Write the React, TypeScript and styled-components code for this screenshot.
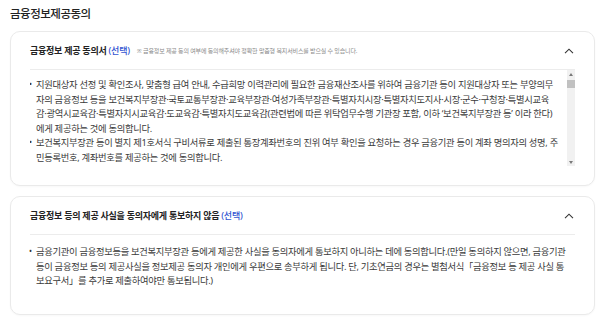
import React, { useEffect, useRef, useState } from 'react'
import styled, { createGlobalStyle } from 'styled-components'

//GLOBAL
const GlobalStyle = createGlobalStyle`
  html, body {
    margin: 0;
    padding: 0;
    background: #ffffff;
  }
  body {
    font-family: 'Noto Sans', 'Noto Sans CJK KR', sans-serif;
    color: #222222;
  }
`

//STYLES
const Page = styled.div`
  width: 600px;
  box-sizing: border-box;
  padding: 5px 5px 6px 10px;
`

const PageTitle = styled.h2`
  margin: 0 0 8px;
  font-size: 11.5px;
  line-height: 18px;
  font-weight: 500;
  letter-spacing: -0.5px;
  color: #222;
`

const Card = styled.section`
  box-sizing: border-box;
  border: 1px solid #eaeaea;
  border-radius: 10px;
  padding: 0 19px;
  background: #fff;
  box-shadow: 0 1px 2px rgba(0, 0, 0, 0.03);

  & + & {
    margin-top: 10px;
  }
`

const CardHeader = styled.header`
  display: flex;
  align-items: center;
  height: 37px;
  border-bottom: 1px solid #ececec;
`

const HeaderTitle = styled.h3`
  margin: 0;
  font-size: 9px;
  font-weight: 700;
  letter-spacing: -0.25px;
  color: #222;
  white-space: nowrap;
`

const Optional = styled.span`
  color: #3355d1;
  font-weight: 500;
`

const Note = styled.span`
  margin-left: 7px;
  font-size: 6px;
  letter-spacing: -0.15px;
  color: #8a8a8a;
  white-space: nowrap;
`

const Toggle = styled.button`
  margin-left: auto;
  margin-right: 1px;
  padding: 0;
  border: 0;
  background: none;
  display: flex;
  align-items: center;
  cursor: pointer;
  color: #333;
`

const CardBody = styled.div<{ $top: number; $bottom: number }>`
  padding: ${p => p.$top}px 0 ${p => p.$bottom}px;
`

const ScrollArea = styled.div`
  display: flex;
  height: 96px;
`

const ScrollContent = styled.div`
  flex: 1;
  min-width: 0;
  overflow-y: auto;
  scrollbar-width: none;
  padding-top: 8px;
  box-sizing: border-box;

  &::-webkit-scrollbar {
    display: none;
  }
`

const Scrollbar = styled.div`
  display: flex;
  flex-direction: column;
  width: 8px;
  flex-shrink: 0;
  background: #f1f1f1;
`

const ScrollButton = styled.div`
  display: flex;
  align-items: center;
  justify-content: center;
  height: 8px;
  color: #7a7a7a;
`

const ScrollTrack = styled.div`
  flex: 1;
  position: relative;
`

const ScrollThumb = styled.div`
  position: absolute;
  left: 0;
  right: 0;
  height: 8px;
  background: #c1c1c1;
`

const List = styled.ul`
  margin: 0;
  padding: 0;
  list-style: none;
`

const Item = styled.li`
  position: relative;
  padding-left: 6px;
  font-size: 9.3px;
  line-height: 14.5px;
  letter-spacing: -0.3px;
  color: #3a3a3a;
  white-space: nowrap;

  &::before {
    content: '•';
    position: absolute;
    left: -1px;
    top: -1px;
    font-size: 8px;
    color: #333;
  }
`

//ICONS
const ChevronUp = () => (
  <svg width="10" height="6" viewBox="0 0 10 6" fill="none">
    <path d="M1 5.2 L5 1.2 L9 5.2" stroke="currentColor" strokeWidth="1.1" />
  </svg>
)

const Arrow = ({ down }: { down?: boolean }) => (
  <svg width="4" height="3" viewBox="0 0 4 3">
    <polygon points={down ? '0,0 4,0 2,3' : '2,0 4,3 0,3'} fill="currentColor" />
  </svg>
)

//DATA
const CONSENT_ITEMS: React.ReactNode[] = [
  <>
    지원대상자 선정 및 확인조사, 맞춤형 급여 안내, 수급희망 이력관리에 필요한 금융재산조사를 위하여 금융기관 등이 지원대상자 또는 부양의무<br />
    자의 금융정보 등을 보건복지부장관·국토교통부장관·교육부장관·여성가족부장관·특별자치시장·특별자치도지사·시장·군수·구청장·특별시교육<br />
    감·광역시교육감·특별자치시교육감·도교육감·특별자치도교육감(관련법에 따른 위탁업무수행 기관장 포함, 이하 ‘보건복지부장관 등’ 이라 한다)<br />
    에게 제공하는 것에 동의합니다.
  </>,
  <>
    보건복지부장관 등이 별지 제1호서식 구비서류로 제출된 통장계좌번호의 진위 여부 확인을 요청하는 경우 금융기관 등이 계좌 명의자의 성명, 주<br />
    민등록번호, 계좌번호를 제공하는 것에 동의합니다.
  </>,
]

const NOTICE_ITEMS: React.ReactNode[] = [
  <>
    금융기관이 금융정보등을 보건복지부장관 등에게 제공한 사실을 동의자에게 통보하지 아니하는 데에 동의합니다.(만일 동의하지 않으면, 금융기관<br />
    등이 금융정보 등의 제공사실을 정보제공 동의자 개인에게 우편으로 송부하게 됩니다. 단, 기초연금의 경우는 별첨서식「금융정보 등 제공 사실 통<br />
    보요구서」를 추가로 제출하여야만 통보됩니다.)
  </>,
]

//COMPONENTS
const ScrollPanel = ({ children }: { children: React.ReactNode }) => {
  const ref = useRef<HTMLDivElement>(null)
  const trackRef = useRef<HTMLDivElement>(null)
  const [progress, setProgress] = useState(0)
  const [trackHeight, setTrackHeight] = useState(0)

  useEffect(() => {
    if (trackRef.current) setTrackHeight(trackRef.current.clientHeight)
  }, [])

  const onScroll = () => {
    const el = ref.current
    if (!el) return
    const max = el.scrollHeight - el.clientHeight
    setProgress(max > 0 ? el.scrollTop / max : 0)
  }

  return (
    <ScrollArea>
      <ScrollContent ref={ref} onScroll={onScroll}>{children}</ScrollContent>
      <Scrollbar>
        <ScrollButton><Arrow /></ScrollButton>
        <ScrollTrack ref={trackRef}>
          <ScrollThumb style={{ top: 2 + progress * Math.max(trackHeight - 12, 0) }} />
        </ScrollTrack>
        <ScrollButton><Arrow down /></ScrollButton>
      </Scrollbar>
    </ScrollArea>
  )
}

//MAIN COMPONENT
export default function App() {
  return (
    <Page>
      <GlobalStyle />
      <PageTitle>금융정보제공동의</PageTitle>

      {/* 동의서 */}
      <Card>
        <CardHeader>
          <HeaderTitle>
            금융정보 제공 동의서 <Optional>(선택)</Optional>
          </HeaderTitle>
          <Note>※ 금융정보 제공 동의 여부에 동의해주셔야 정확한 맞춤형 복지서비스를 받으실 수 있습니다.</Note>
          <Toggle aria-label="접기"><ChevronUp /></Toggle>
        </CardHeader>
        <CardBody $top={0} $bottom={19}>
          <ScrollPanel>
            <List>
              {CONSENT_ITEMS.map((item, i) => <Item key={i}>{item}</Item>)}
            </List>
          </ScrollPanel>
        </CardBody>
      </Card>

      {/* 통보 */}
      <Card>
        <CardHeader>
          <HeaderTitle>
            금융정보 등의 제공 사실을 동의자에게 통보하지 않음 <Optional>(선택)</Optional>
          </HeaderTitle>
          <Toggle aria-label="접기"><ChevronUp /></Toggle>
        </CardHeader>
        <CardBody $top={10} $bottom={25}>
          <List>
            {NOTICE_ITEMS.map((item, i) => <Item key={i}>{item}</Item>)}
          </List>
        </CardBody>
      </Card>
    </Page>
  )
}
